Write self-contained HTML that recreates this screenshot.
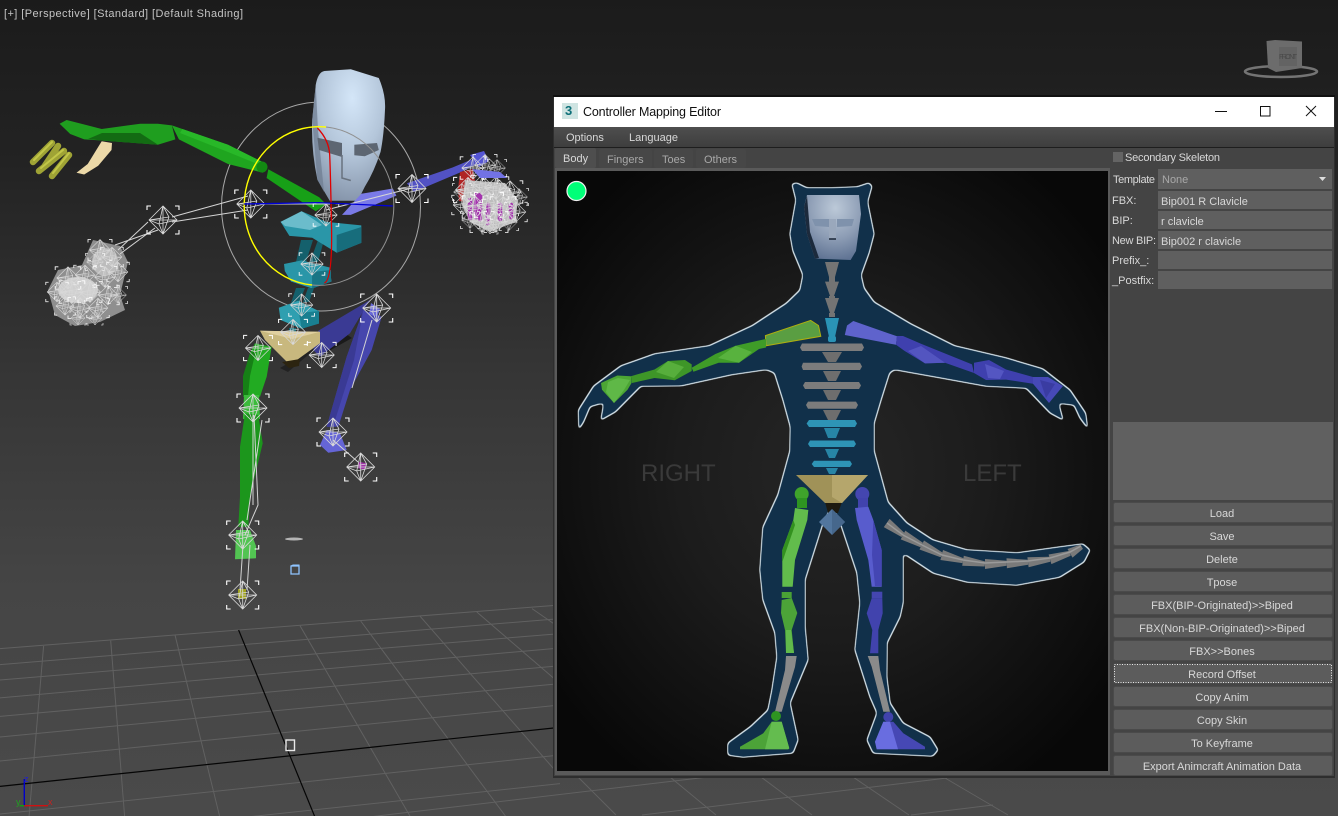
<!DOCTYPE html>
<html><head><meta charset="utf-8"><title>Controller Mapping Editor</title>
<style>
html,body{margin:0;padding:0;background:#333;width:1338px;height:816px;overflow:hidden}
svg{display:block;position:absolute;left:0;top:0}
text{font-family:"Liberation Sans",sans-serif;font-size:11px;fill:#d8d8d8}
.b{text-anchor:middle}
</style></head><body>
<svg width="1338" height="816" viewBox="0 0 1338 816" xmlns="http://www.w3.org/2000/svg">
<defs>
<linearGradient id="bg" x1="0" y1="0" x2="0" y2="1"><stop offset="0" stop-color="#1b1b1b"/><stop offset=".2" stop-color="#232323"/><stop offset=".45" stop-color="#353535"/><stop offset=".72" stop-color="#454545"/><stop offset="1" stop-color="#4a4a4a"/></linearGradient>
<radialGradient id="cv" cx="0.5" cy="0.5" r="0.62"><stop offset="0" stop-color="#262626"/><stop offset=".45" stop-color="#1c1c1c"/><stop offset="1" stop-color="#080808"/></radialGradient>
<radialGradient id="hd" cx="0.55" cy="0.22" r="0.85"><stop offset="0" stop-color="#d4e6f8"/><stop offset=".5" stop-color="#b4c6da"/><stop offset="1" stop-color="#7f8ea4"/></radialGradient>
<radialGradient id="hp" cx="0.55" cy="0.2" r="0.85"><stop offset="0" stop-color="#bcc9d8"/><stop offset=".55" stop-color="#8d9db5"/><stop offset="1" stop-color="#5b6f90"/></radialGradient>
<linearGradient id="menu" x1="0" y1="0" x2="0" y2="1"><stop offset="0" stop-color="#4e4e4e"/><stop offset="1" stop-color="#3e3e3e"/></linearGradient>
<g id="w" fill="none" stroke="#d8d8d8" stroke-width=".8">
<path d="M-14 0L0-14L14 0L0 14ZM-14 0L14 0M0-14L0 14M-14 0L-4 4L14 0M0-14L-4 4L0 14M0-14L6-3L0 14M-14 0L6-3"/>
<path stroke="#fff" stroke-width="1.1" d="M-16-10v-4h4M12-14h4v4M16 10v4h-4M-12 14h-4v-4"/>
</g>
<filter id="sm" filterUnits="userSpaceOnUse" x="560" y="170" width="545" height="600" color-interpolation-filters="sRGB">
<feGaussianBlur in="SourceAlpha" stdDeviation="1.5" result="b"/>
<feComponentTransfer in="b" result="o"><feFuncA type="linear" slope="5" intercept="-1.8"/></feComponentTransfer>
<feMorphology in="o" operator="erode" radius="1.2" result="i"/>
<feFlood flood-color="#d6e3ea"/><feComposite in2="o" operator="in" result="ow"/>
<feFlood flood-color="#11304a"/><feComposite in2="i" operator="in" result="iw"/>
<feMerge><feMergeNode in="ow"/><feMergeNode in="iw"/></feMerge>
</filter>
</defs>

<!-- viewport -->
<rect width="1338" height="816" fill="url(#bg)"/>
<g stroke="#616161" stroke-width="1" fill="none">
<path d="M0 648.6L560 605M0 664.6L560 618.6M0 680L560 633.6M0 697.9L560 648M0 716.4L560 665.7M0 737L560 683.6M0 761L560 705M0 814L560 755M125 830L560 783.6M250 831L708 777M642 815L947 778M911 815L993 805"/>
<path d="M43.6 646L27.9 830M110.7 640.7L125.7 830M175 635L223 830M300 625.7L418 830M360.7 621L518 833M419.6 615.7L560 776M476.8 612L560 683.6M532 608.6L560 628M578 777L616 815M670 777L716 815M761 777L812 815M853 777L909 815M945 778L1008 815"/>
</g>
<path d="M0 786.4L553.6 728M238.6 630L321.4 832.9" stroke="#050505" stroke-width="1.2" fill="none"/>
<rect x="286" y="740" width="8.5" height="10.5" fill="none" stroke="#e8e8e8" stroke-width="1.4"/>
<path d="M24.3 805.7V779" stroke="#0000c8" stroke-width="1.4"/>
<path d="M24.3 805.7H48" stroke="#d01010" stroke-width="1.4"/>
<path d="M19.5 805.7H24" stroke="#10a010" stroke-width="1.4"/>
<text x="24" y="782" style="font-size:9px;fill:#2020d0">z</text>
<text x="48" y="805" style="font-size:9px;fill:#c82020">x</text>
<text x="16" y="805" style="font-size:9px;fill:#20a020">y</text>

<text x="4" y="17" textLength="239" lengthAdjust="spacing" style="fill:#c4c4c4">[+] [Perspective] [Standard] [Default Shading]</text>

<!-- viewcube -->
<ellipse cx="1281" cy="71.5" rx="36" ry="5.5" fill="none" stroke="#747474" stroke-width="2.5"/>
<path d="M1266.5 41L1275 40L1302 41.5V68L1276 72L1268 68Z" fill="#6c6c6c"/>
<path d="M1279 47H1297V66H1279Z" fill="#636363"/>
<text x="1279" y="59" style="font-size:7px;fill:#484848" textLength="18">FRONT</text>

<!-- skeleton: shadow -->
<path d="M258 395L268 345L255 350L245 395ZM320 345L288 372L280 368Z" fill="#222"/>
<path d="M320 356L352 338L340 330Z" fill="#1a1a1a"/>
<!-- ring back -->
<ellipse cx="321" cy="206.5" rx="99.5" ry="104.5" fill="none" stroke="#a8a8a8" stroke-width="1"/>
<!-- head -->
<path d="M315.7 85Q318 72 324.4 71L350.8 69.3L378.8 78Q386 95 385 109.6Q384 135 380.6 151.7Q374 172 364.8 186.8L357.8 200.8L329.7 200.8L317.4 179.8Q311 150 312.2 120Z" fill="url(#hd)"/>
<path d="M315.7 85L312.2 120L317.4 179.8L324 192L318 130Z" fill="#6e7c90" opacity=".7"/>
<path d="M317.4 137.7L342 143V157L319 150Z" fill="#5d6672"/>
<path d="M354.3 144.7L377 143L378.8 150L364.8 156.3L354.3 155.2Z" fill="#5d6672"/>
<path d="M342 155V178L350.8 180.5" fill="none" stroke="#68727f" stroke-width="1.5"/>
<!-- green arm -->
<path d="M59.6 123.7L66.6 120L87.7 125.4L101.7 129L140.3 123.7L157.8 123.7L171.9 125.4L175.4 139.4L157.8 144.7L101.7 140.5L84.2 139.4L70.2 134Z" fill="#1f9e1f"/>
<path d="M88 139L102 133L140 133L158 144.7L101.7 140.5Z" fill="#136b13"/>
<path d="M171.9 125.4L182.4 129L228 144.7L266.6 164L263 172.8L228 164L178.9 139.4Z" fill="#1fa51f"/>
<path d="M182.4 129L228 144.7L266.6 164L265 167L228 152L180 133Z" fill="#28b828"/>
<path d="M268.3 169.3L319.2 197.3L326.2 204.3L315.7 211.3L266.6 178Z" fill="#17a017"/>
<circle cx="262" cy="167" r="5.5" fill="#128a12"/>
<!-- fingers -->
<g fill="none" stroke="#9fa335" stroke-width="6.5" stroke-linecap="round">
<path d="M33 162L52 143M39 171L64 151M44 167L58 146M52 176L69 155"/>
</g>
<g fill="none" stroke="#c2c648" stroke-width="2" stroke-linecap="round">
<path d="M34 160L52 142M41 168L63 150M53 173L69 153"/>
</g>
<path d="M76.5 172.8L87.7 164L101.7 141.2L112 143L111.5 150L98.2 165.7L84.2 174.5Z" fill="#ecd9a8"/>
<!-- torso -->
<path d="M301 240L296 262H306L313 240ZM318 240L310 262H318L324 240Z" fill="#14606c"/>
<path d="M280.6 221.9L301.6 211.3L326.2 221.9L361.3 225.4V242.9L336.7 252.7L312.2 237.7L289.4 235.9Z" fill="#2a96a8"/>
<path d="M280.6 221.9L301.6 211.3L322 225L310 230L285 226Z" fill="#6bbccb"/>
<path d="M336.7 235L361.3 227V242.9L336.7 252.7Z" fill="#176d7c"/>
<path d="M284 264L301.6 260.4L329.7 267.5L331.5 281.5L312.2 288.5L291 281.5L284.8 271Z" fill="#2a96a8"/>
<path d="M312 272L331 270V281.5L312.2 288.5Z" fill="#197585"/>
<path d="M296 288L291 303H299L305 288ZM308 288L303 302H309L314 288Z" fill="#14606c"/>
<path d="M278.8 307.8L298.1 300.8L319.2 311.3L317.4 323.6L301.6 328.8L280.6 320Z" fill="#2f9fb0"/>
<path d="M299 313L319 311V323.6L301.6 328.8Z" fill="#197f90"/>
<path d="M289 328L290 342H296L296 328Z" fill="#136a76"/>
<!-- pelvis and legs -->
<path d="M318.3 330.7L370 300L350 333.3L320 356.7L313.3 350Z" fill="#3a3a94"/>
<path d="M363.3 310L381.7 316.7L371.7 350L350 390L338.3 426.7L326.7 426.7L346.7 356.7Z" fill="#4646ad"/>
<path d="M363.3 310L346.7 356.7L326.7 426.7L333 426.7L354 360Z" fill="#3a3a94"/>
<path d="M371 303l9 6-3 8-8-3z" fill="#6a6ad8"/>
<path d="M326.7 430L340 433.3L346.7 450L328.3 452.7L320 445Z" fill="#6565d6"/>
<path d="M358.3 461.7L366.7 463.3L365 470L358.3 468.3Z" fill="#a030a8"/>
<path d="M260 330.7L320 331.7L320 343.3L290 365L265 340Z" fill="#c8b87e"/>
<path d="M260 330.7L320 331.7L292 339Z" fill="#e0d0a0"/>
<path d="M282 362l7 6 10-2 1-7z" fill="#2c2410"/>
<path d="M255 343.3L271.7 346.7L266.7 376.7L260 396.7L243.3 396.7L243.3 376.7L250 353.3Z" fill="#22ab22"/>
<path d="M250 353L243 376L243 396L248 396L250 376L256 350Z" fill="#168016"/>
<path d="M244 395h15l1 24h-17z" fill="#3abb3a"/>
<path d="M245 413.3L258.3 415L262.7 443.3L250 496.7L248.3 526.7L238.3 526.7L240 496.7L240 446.7Z" fill="#1c961c"/>
<path d="M236 530h14l6 16v12.3l-21 1z" fill="#52c452"/>
<rect x="238" y="589" width="8" height="10" fill="#a2a420"/>
<ellipse cx="294" cy="539" rx="9" ry="1.5" fill="#b4b4b4"/>
<path d="M291 566h8v8h-8z" fill="none" stroke="#8fc4ff" stroke-width="1.3"/>
<path d="M291 566l2-1h6v1" fill="none" stroke="#8fc4ff"/>
<!-- blue arm -->
<path d="M361.3 193.8L392.8 188.5L396.4 195.6L350.8 214.9L342 214.9Z" fill="#7a7ae6"/>
<path d="M406.9 183.3L452.5 167.5L473.5 158.7L480.5 162.2L459.5 172.8L413.9 192Z" fill="#5252c4"/>
<path d="M470 155l14-4 5 10-10 6z" fill="#5555d4"/>
<path d="M460 172l13-3 3 18-3 16-14-2-1-12z" fill="#b02424"/>

<!-- right hand cluster -->
<path d="M465 180L505 183L518 200L515 222L490 232L470 222L462 205Z" fill="#bdbdbd"/>
<path d="M470 200v18M480 195v24M488 205v18M500 205v14M511 205v12M476 195v22" stroke="#a434ae" stroke-width="4.5" stroke-linecap="round"/>
<g>
<use href="#w" transform="translate(473 168) scale(.8)"/><use href="#w" transform="translate(485 165) scale(.75)"/><use href="#w" transform="translate(497 168) scale(.6)"/><use href="#w" transform="translate(462 192) scale(.6)"/><use href="#w" transform="translate(468 190) scale(.9)"/><use href="#w" transform="translate(482 185) scale(.7)"/><use href="#w" transform="translate(496 188) scale(.8)"/><use href="#w" transform="translate(510 192) scale(.8)"/><use href="#w" transform="translate(519 197) scale(.6)"/><use href="#w" transform="translate(463 205) scale(.7)"/><use href="#w" transform="translate(475 207) scale(.8)"/><use href="#w" transform="translate(489 205) scale(.9)"/><use href="#w" transform="translate(503 208) scale(.8)"/><use href="#w" transform="translate(516 212) scale(.7)"/><use href="#w" transform="translate(470 220) scale(.6)"/><use href="#w" transform="translate(482 222) scale(.75)"/><use href="#w" transform="translate(496 222) scale(.75)"/><use href="#w" transform="translate(509 222) scale(.6)"/><use href="#w" transform="translate(490 227) scale(.5)"/>
</g>
<path d="M472 169L500 172L507 178L480 178Z" fill="#7272e4"/>

<!-- left hand cluster -->
<path d="M93 240L120 246L128 262L120 295L125 310L100 322L75 326L55 315L48 290L58 270L82 265Z" fill="#a8a8a8" opacity=".8"/>
<ellipse cx="78" cy="290" rx="20" ry="13" fill="#cfcfcf"/>
<ellipse cx="105" cy="262" rx="13" ry="14" fill="#bcbcbc"/>
<g>
<use href="#w" transform="translate(100 250) scale(.75)"/><use href="#w" transform="translate(112 257) scale(.7)"/><use href="#w" transform="translate(95 262) scale(.6)"/><use href="#w" transform="translate(118 272) scale(.7)"/><use href="#w" transform="translate(105 277) scale(.75)"/><use href="#w" transform="translate(85 275) scale(.7)"/><use href="#w" transform="translate(68 278) scale(.8)"/><use href="#w" transform="translate(57 292) scale(.7)"/><use href="#w" transform="translate(72 292) scale(.8)"/><use href="#w" transform="translate(90 292) scale(.75)"/><use href="#w" transform="translate(108 295) scale(.7)"/><use href="#w" transform="translate(118 295) scale(.6)"/><use href="#w" transform="translate(65 306) scale(.65)"/><use href="#w" transform="translate(80 308) scale(.75)"/><use href="#w" transform="translate(98 308) scale(.7)"/><use href="#w" transform="translate(78 318) scale(.5)"/><use href="#w" transform="translate(95 318) scale(.5)"/>
</g>

<!-- bones lines and wire gizmos -->
<g fill="none" stroke="#d4d4d4" stroke-width="1">
<path d="M172 217L248 196M172 222L248 210M245 204H330M148 222L118 250M155 228L120 254M158 230L115 245M412 188L326 210"/>
<path d="M253 415V505M254 415L258 505L245 535M262 420L247 520M243 545L240 590M250 545L247 590M372 320L352 388M333 440L358 462"/>
</g>
<g>
<use href="#w" transform="translate(250.8 204)"/><use href="#w" transform="translate(163 220)"/><use href="#w" transform="translate(412 188.5)"/><use href="#w" transform="translate(312 264) scale(.8)"/><use href="#w" transform="translate(301.6 305) scale(.8)"/><use href="#w" transform="translate(326 215) scale(.8)"/><use href="#w" transform="translate(258 348) scale(.9)"/><use href="#w" transform="translate(253 408)"/><use href="#w" transform="translate(242.7 535)"/><use href="#w" transform="translate(242.7 595)"/><use href="#w" transform="translate(293 332) scale(.9)"/><use href="#w" transform="translate(321.7 355) scale(.9)"/><use href="#w" transform="translate(376.7 308)"/><use href="#w" transform="translate(333 432)"/><use href="#w" transform="translate(360.7 467)"/>
</g>
<!-- gizmo -->
<path d="M326 127A74.5 79 0 0 1 312 285" fill="none" stroke="#909090" stroke-width="1"/>
<path d="M326 127A74.5 79 0 0 0 312 285" fill="none" stroke="#ffff00" stroke-width="1.4"/>
<path d="M317.4 128Q329 140 329.7 155T331.5 225T324.4 283" fill="none" stroke="#e00000" stroke-width="1.3"/>
<path d="M243.8 204L319 202.6L392.8 206" fill="none" stroke="#0000d8" stroke-width="1.3"/>

<!-- window -->
<rect x="553" y="95" width="782" height="2" fill="#111"/>
<rect x="553" y="97" width="782" height="681" fill="#2e2e2e"/>
<rect x="554" y="97" width="780" height="679" fill="#444"/>
<rect x="554" y="97" width="780" height="30" fill="#fff"/>
<rect x="562" y="103" width="16" height="16" fill="#cfe4e2"/>
<text x="565" y="115" style="font-size:13px;font-weight:bold;fill:#0d6f78">3</text>
<text x="583" y="116" style="font-size:12.5px;fill:#101010" textLength="138">Controller Mapping Editor</text>
<path d="M1215 111.5H1227" stroke="#111" stroke-width="1"/>
<rect x="1260.5" y="106.5" width="9.5" height="9.5" fill="none" stroke="#111"/>
<path d="M1306 106L1316 116M1316 106L1306 116" stroke="#111" stroke-width="1"/>
<rect x="554" y="127" width="780" height="20" fill="url(#menu)"/>
<rect x="554" y="147" width="780" height="1" fill="#1e1e1e"/>
<text x="566" y="141">Options</text>
<text x="629" y="141">Language</text>

<!-- tabs -->
<rect x="555" y="148" width="41" height="20" rx="2" fill="#4e4e4e"/>
<rect x="599" y="149" width="53" height="19" rx="2" fill="#474747"/>
<rect x="654" y="149" width="39" height="19" rx="2" fill="#474747"/>
<rect x="696" y="149" width="50" height="19" rx="2" fill="#474747"/>
<text x="563" y="162">Body</text>
<text x="607" y="163" style="fill:#a8a8a8">Fingers</text>
<text x="662" y="163" style="fill:#a8a8a8">Toes</text>
<text x="704" y="163" style="fill:#a8a8a8">Others</text>
<rect x="555" y="168" width="555" height="607" fill="#5a5a5a"/>

<!-- canvas -->
<rect x="557" y="171" width="551" height="600" fill="url(#cv)"/>
<circle cx="576.5" cy="191" r="9.5" fill="#00ff78" stroke="#f0f0f0" stroke-width="1.2"/>
<text x="641" y="481" style="font-size:24px;fill:#3a3a3a">RIGHT</text>
<text x="963" y="481" style="font-size:24px;fill:#3a3a3a">LEFT</text>

<path filter="url(#sm)" d="M792 184L797 183L807 188L832 188L857 187L869 183L872 186L867.5 202L874 234L869 253L861 275L864 288L874 302L911 324L955 346L1006 358L1043 369L1070 390L1085.5 413L1087.5 428L1080 418L1074 405L1058.5 403L1063 420L1050 413L1026 388L986 386L942 378L894.5 369.5L889.5 373L881 400L874 423.5L874 450.6L882 480L888 502L907 523L933 540L967 550L1017 553L1060 547L1083 544L1090 550L1084 562L1060 577L1017 585L967 582L933 573L903 553L903 603L900 617L887 643L886.7 677L890 703L903 723L930 737L938 750L933 756L873 753L867 740L877 713L870 697L855 650L860 603L857 573L840 522L832 505L823 523L805 580L805 627L808 660L790 703L798 740L793 753L743 757L728 755L728 743L750 727L768 710L772 690L777 657L775 633L763 600L760 570L763 527L778 494.5L790 450.6L790.4 427L783 400L774.5 373L766 369.5L732 374.5L681.6 385.7L641 386L615.6 411.7L601 420L604 402.6L590 406.6L583.5 422L579 429L578.5 410L593.7 386L620.7 366L654.5 354L708.6 346L752.5 325.5L786 303.5L800 290L803 275L793 251L790 234L796 200Z" fill="#11304a" stroke="#11304a" stroke-width="1.2" stroke-linejoin="round"/>

<!-- panel head -->
<path d="M807 195L859 195L861 214L856 251L850.6 260L815 258.6L807 234L804 207Z" fill="url(#hp)"/>
<path d="M804 207L807 234L815 258.6L819 258L810 232L807 196Z" fill="#1c2a3c"/>
<path d="M812 219H829V227L815 226ZM837 219H854L852 226L837 227Z" fill="#7f92ac"/>
<path d="M829 219H836V239H829Z" fill="#9aa8bc"/>
<path d="M829 239H836" stroke="#1a2636" stroke-width="1.5"/>

<!-- neck spine -->
<g fill="#747474">
<path d="M825 262H839L835 277H829Z"/><path d="M829 277h6v5h-6z"/>
<path d="M825 281.6H839L834 296H830Z"/><path d="M829 296h6v2h-6z"/>
<path d="M825 298H839L834 313H830Z"/><path d="M829 313h6v4h-6z"/>
</g>
<path d="M825 318H839L835 337H829Z" fill="#2a93b6"/><rect x="828" y="336" width="8" height="6" rx="2" fill="#2a93b6"/>

<!-- spine rows -->
<g fill="#7c7c7c">
<path d="M802 343.5H862L864 347.5L862 351H802L800 347.5Z"/><path d="M822 352H842L836 362H828Z" fill="#6e6e6e"/>
<path d="M803 362.7H860L862 366.5L860 370H803L801.6 366.5Z"/><path d="M823 371H841L836 381H828Z" fill="#6e6e6e"/>
<path d="M805 382H859L861 385.5L859 389H805L803 385.5Z"/><path d="M823 390H841L836 400H828Z" fill="#6e6e6e"/>
<path d="M808 401.6H856L858 405L856 408.7H808L806 405Z"/><path d="M823 410H841L836 420H828Z" fill="#6e6e6e"/>
</g>
<g fill="#2e94b6">
<path d="M809 420H855L857 423.5L855 427H809L806.6 423.5Z"/><path d="M824 428H840L836 438H828Z" fill="#2785a6"/>
<path d="M810 440.5H854L856 444L854 447H810L808 444Z"/><path d="M825 449H839L835 458H829Z" fill="#2785a6"/>
<path d="M814 460.7H850L852 464L850 467H814L811.7 464Z"/><path d="M826 468H838L835 474H829Z" fill="#2785a6"/>
</g>

<!-- pelvis -->
<path d="M825 502H842L838 513H828Z" fill="#1d1a10"/>
<path d="M796 475H868L842 503H825Z" fill="#a09258"/>
<path d="M832 475L868 475L842 503L832 497Z" fill="#b5a66c"/>
<path d="M819 522l13-13l13 13l-13 13z" fill="#52769e"/>
<path d="M832 509l13 13l-13 13z" fill="#46678c"/>

<!-- green arm panel -->
<path d="M765.4 335.6L810.7 320.4L818.5 325.5L820.8 336.3L766 345.8Z" fill="#5a9e42" stroke="#aeae10" stroke-width="1"/>
<path d="M766 339L757.6 340.7L735.6 345.8L715.4 354L691.7 367.8L693.4 371.8L718.7 362.7L739 362.7L759 349L766 347.5Z" fill="#3f9c28"/>
<path d="M735.6 345.8L718 358L739 362.7L752 352Z" fill="#58b23e"/>
<path d="M691.7 364.4L685 360L668 361L654.5 369.5L630.9 376.2L631.9 383L654.5 378L674.8 380.3L691.7 371Z" fill="#3e9628"/>
<path d="M668 361L656 372L674 378L684 367Z" fill="#57ae3c"/>
<path d="M630.9 376.2L617.3 375.5L601 383L602 389.7L614 403L627.5 389.7L631.5 383Z" fill="#4ca534"/>
<path d="M608 382L618 378L630 380L624 390L614 403L606 392Z" fill="#5fb847"/>

<!-- blue arm panel -->
<path d="M853.3 321L847 325.5L844.8 335L896 344.8L897 336.3Z" fill="#5f63cc"/>
<path d="M897 336L903 336L921.6 344L972 364.4L974 373L945 362.7L925 363.4L904.7 351L896 344.8Z" fill="#3f40ae"/>
<path d="M921 346L945 362.7L925 363.4L908 351Z" fill="#5355c0"/>
<path d="M974 362.7L989 360L1006 369.5L1033 377L1033 383.7L1006 379.6L986 380L974 373Z" fill="#3f40ae"/>
<path d="M985 364L1004 371L1000 379L988 378Z" fill="#5456c2"/>
<path d="M1033 377L1048 377L1063 386L1049 403L1033 383.7Z" fill="#4649b8"/>
<path d="M1040 380L1055 384L1046 398Z" fill="#3a3ca2"/>

<!-- legs panel: green -->
<circle cx="801.7" cy="494" r="7" fill="#3fa32b"/><path d="M797 498h10v10h-10z" fill="#2e9421"/>
<path d="M795 508L808.3 510L807.3 520L795 560L792.7 586.7L782.3 586.7L782.3 550L793.3 520Z" fill="#62bc4c"/>
<path d="M793.3 520L782.3 550V562L795 525Z" fill="#33911f"/>
<path d="M781.7 592h10v6h-10z" fill="#49a135"/>
<path d="M781.7 600L791.7 598L797.3 613L791.7 630L794 653L786 653L785 630L781 613Z" fill="#4ca338"/>
<path d="M786 630L791 630L794 653L786 653Z" fill="#61ba4b"/>
<path d="M786 656L796.7 656L795 667L781.7 711.7L775 711.7L785 670Z" fill="#8a8a8a"/>
<circle cx="776" cy="716" r="5" fill="#2e9421"/>
<path d="M771.7 721.7L781.7 721.7L789.3 748.3L788.3 749.3L740 749.3L740 746.7L763.3 733.3Z" fill="#4ca338"/>
<path d="M771.7 721.7L781.7 721.7L789.3 748.3L788.3 749.3L765 749.3Z" fill="#64bc4f"/>

<!-- legs panel: blue -->
<circle cx="862.3" cy="494" r="7" fill="#4446b0"/><path d="M858 498h10v10h-10z" fill="#4143ad"/>
<path d="M855 508L868.3 506.7L873.3 520L881.7 550L881.7 586.7L871.7 586.7L868.3 560L856.7 520Z" fill="#585ccd"/>
<path d="M873.3 520L881.7 550V586L875 586L872 555Z" fill="#4446b3"/>
<path d="M871.7 591.7h10.6v6.6h-10.6z" fill="#4446b0"/>
<path d="M871.7 598.3L882.3 598.3L882.7 613.3L878.3 630L878.3 653.3L870 653.3L872.3 630L866.7 613.3Z" fill="#4143ad"/>
<path d="M867.7 656L878.3 656L880 670L890 711.7L883.3 711.7L871.7 666.7Z" fill="#8a8a8a"/>
<circle cx="888.3" cy="717" r="5" fill="#4143ad"/>
<path d="M883.3 721.7L893.3 721.7L903.3 733.3L925 746.7L925 749.3L876.7 749.3L875 741.7Z" fill="#4648b4"/>
<path d="M883.3 721.7L890 721.7L898 749.3L876.7 749.3L875 741.7Z" fill="#696de0"/>

<!-- tail -->
<g fill="#7a7a7a">
<path d="M889.6 518.9L883.8 527.1L901.5 537L904.5 533Z"/>
<path d="M905.3 530.6L900.7 539.4L920.5 547.2L922.9 542.8Z"/>
<path d="M924 540.5L919.5 549.5L940.6 557.2L942.8 552.8Z"/>
<path d="M943 550L940.4 560L962.4 563.1L963.6 558.3Z"/>
<path d="M963.8 555.7L962.2 565.7L984.6 566.5L985.4 561.5Z"/>
<path d="M985 559L985 569L1006.7 565.8L1006.7 560.8Z"/>
<path d="M1006.5 558.3L1006.9 568.3L1028.1 564.8L1027.9 559.8Z"/>
<path d="M1027.4 557.3L1028.6 567.3L1050.3 561.8L1049.7 556.8Z"/>
<path d="M1048.6 554.5L1051.4 564.1L1070.7 555.7L1069.3 550.9Z"/>
<path d="M1067.5 549L1072.5 557.6L1082.9 548.9L1080.5 544.5Z"/>
</g>
<path d="M887 523L903 535L922 545L942 555L963 560L985 563L1007 562L1028 561L1050 558L1070 552L1081 546" fill="none" stroke="#9a9a9a" stroke-width="1.5"/>

<!-- right panel -->
<rect x="1110" y="148" width="224" height="628" fill="#444"/>
<rect x="1113" y="152" width="10" height="10" fill="#646464"/>
<text x="1125" y="161" textLength="95">Secondary Skeleton</text>
<g fill="#5f5f5f">
<rect x="1158" y="169" width="174" height="20"/>
<rect x="1158" y="191" width="174" height="18"/>
<rect x="1158" y="211" width="174" height="18"/>
<rect x="1158" y="231" width="174" height="18"/>
<rect x="1158" y="251" width="174" height="18"/>
<rect x="1158" y="271" width="174" height="18"/>
</g>
<path d="M1319 177h7l-3.5 4z" fill="#ddd"/>
<text x="1113" y="183" textLength="42">Template</text>
<text x="1162" y="183" style="fill:#a8a8a8">None</text>
<text x="1112" y="204">FBX:</text>
<text x="1161" y="205">Bip001 R Clavicle</text>
<text x="1112" y="224">BIP:</text>
<text x="1161" y="225">r clavicle</text>
<text x="1112" y="244" textLength="44">New BIP:</text>
<text x="1161" y="245">Bip002 r clavicle</text>
<text x="1112" y="264">Prefix_:</text>
<text x="1112" y="284">_Postfix:</text>
<rect x="1113" y="422" width="220" height="78" fill="#606060"/>

<g fill="#5c5c5c" stroke="#4a4a4a" stroke-width="1">
<rect x="1113.5" y="502.5" width="219" height="20" rx="2"/>
<rect x="1113.5" y="525.5" width="219" height="20" rx="2"/>
<rect x="1113.5" y="548.5" width="219" height="20" rx="2"/>
<rect x="1113.5" y="571.5" width="219" height="20" rx="2"/>
<rect x="1113.5" y="594.5" width="219" height="20" rx="2"/>
<rect x="1113.5" y="617.5" width="219" height="20" rx="2"/>
<rect x="1113.5" y="640.5" width="219" height="20" rx="2"/>
<rect x="1113.5" y="663.5" width="219" height="20" rx="2"/>
<rect x="1113.5" y="686.5" width="219" height="20" rx="2"/>
<rect x="1113.5" y="709.5" width="219" height="20" rx="2"/>
<rect x="1113.5" y="732.5" width="219" height="20" rx="2"/>
<rect x="1113.5" y="755.5" width="219" height="20" rx="2"/>
</g>
<rect x="1114.5" y="664.5" width="217" height="18" fill="none" stroke="#e8e8e8" stroke-dasharray="1 1.5" stroke-width="1"/>
<text class="b" x="1222" y="517">Load</text>
<text class="b" x="1222" y="540">Save</text>
<text class="b" x="1222" y="563">Delete</text>
<text class="b" x="1222" y="586">Tpose</text>
<text class="b" x="1222" y="609">FBX(BIP-Originated)&gt;&gt;Biped</text>
<text class="b" x="1222" y="632">FBX(Non-BIP-Originated)&gt;&gt;Biped</text>
<text class="b" x="1222" y="655">FBX&gt;&gt;Bones</text>
<text class="b" x="1222" y="678">Record Offset</text>
<text class="b" x="1222" y="701">Copy Anim</text>
<text class="b" x="1222" y="724">Copy Skin</text>
<text class="b" x="1222" y="747">To Keyframe</text>
<text class="b" x="1222" y="770">Export Animcraft Animation Data</text>
</svg>
</body></html>
